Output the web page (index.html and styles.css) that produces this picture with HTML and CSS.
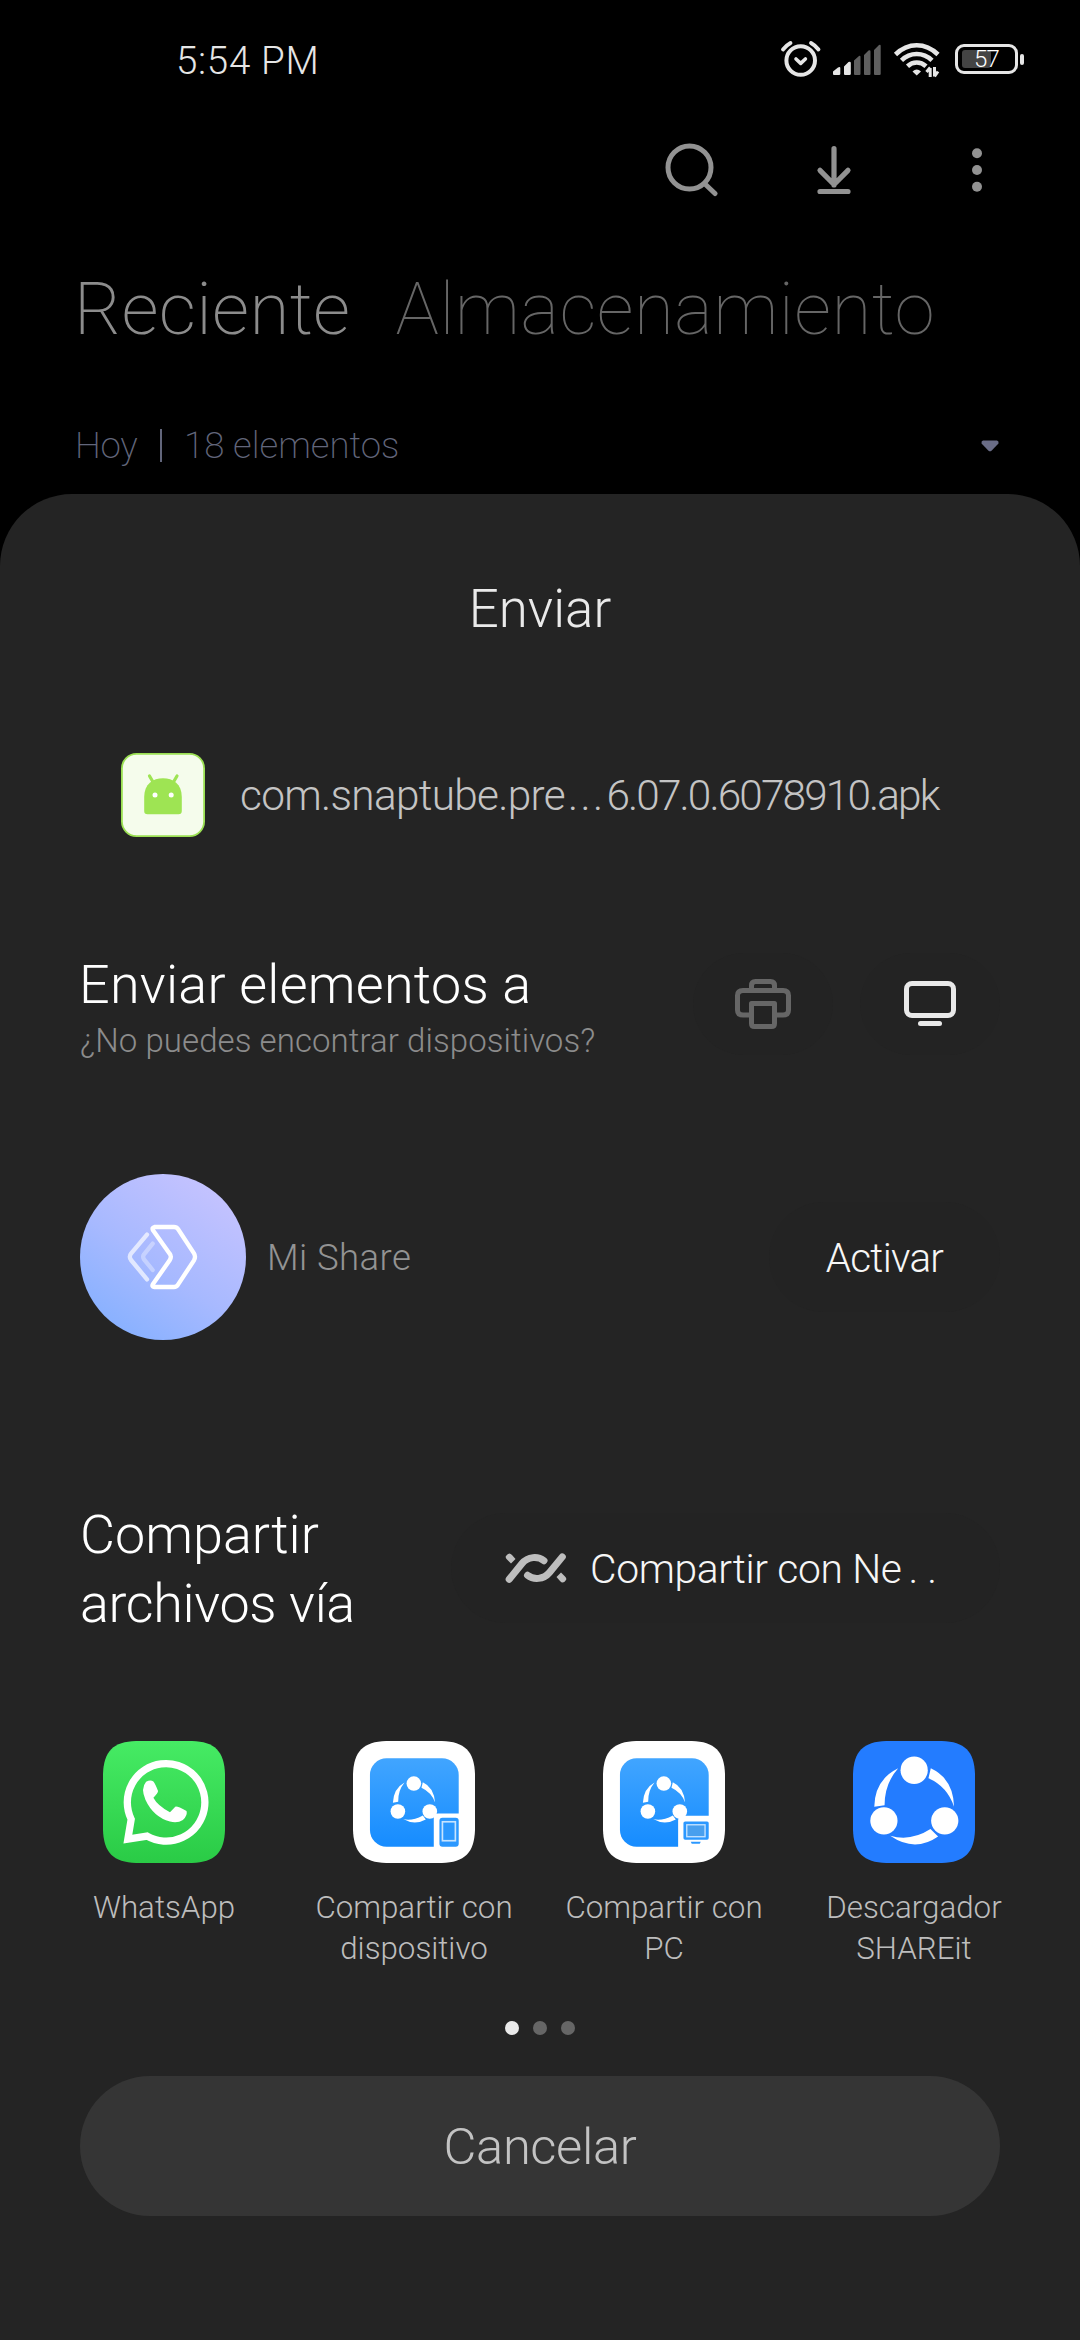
FILE: index.html
```
<!DOCTYPE html>
<html lang="es">
<head>
<meta charset="utf-8">
<title>Enviar</title>
<link rel="stylesheet" href="styles.css">
</head>
<body>
<header class="status">
  <span class="clock">5:54 PM</span>
  <div class="status-icons">
    <svg class="alarm" width="42" height="40" viewBox="0 0 42 40" fill="none" stroke="#e6e6e6" stroke-linecap="round">
      <circle cx="20.7" cy="20.5" r="14.3" stroke-width="4"/>
      <path d="M16 19l4.7 4.3L25.400 19" stroke-width="3.600" stroke-linejoin="round"/>
      <path d="M3 9.500Q6 5.500 10.500 3M38.500 9.500Q35.500 5.500 31 3" stroke-width="3.800"/>
    </svg>
    <svg class="signal" width="48" height="40" viewBox="0 0 48 40">
      <path fill="#e6e6e6" d="M0 31.500 5 27.500Q7.300 26.500 7.300 28V34Q7.300 35 6 35H1Q0 35 0 34zM11 26.500 15.500 22Q17.800 21 17.800 23V34Q17.800 35 16.500 35H12Q11 35 11 34z"/>
      <path fill="#5f5f5f" d="M21 20.500 26 16Q27.500 15.300 27.500 17V34Q27.500 35 26.500 35H22Q21 35 21 34zM31 15 35.500 10.500Q37.500 9.500 37.500 11.500V34Q37.500 35 36.500 35H32Q31 35 31 34zM41 10 46 5Q47.700 4 47.700 6V34Q47.700 35 46.500 35H42Q41 35 41 34z"/>
    </svg>
    <svg class="wifi" width="48" height="40" viewBox="0 0 48 40" fill="none" stroke="#e6e6e6" stroke-width="4.600">
      <path d="M2.500 14.500Q12 5.300 23.700 5.300T45 14.500M8.500 20.300Q15 14 23.700 14T39 20.300M14.500 26.200Q18.500 22.500 23.700 22.500T33 26.200"/>
      <path d="M19.500 31.500Q23.700 27.500 28 31.500L23.700 35.500z" fill="#e6e6e6" stroke="none"/>
      <path d="M37.200 37V28M37.200 27.500 33.500 32M41.500 27V36.500M41.500 36.500 45 31.500" stroke-width="3"/>
    </svg>
    <div class="battery"><div class="battery-body"><i class="charge"></i><b class="percent">57</b></div><i class="battery-tip"></i></div>
  </div>
</header>

<nav class="toolbar">
  <svg width="54" height="54" viewBox="0 0 54 54" fill="none" stroke="#929292" stroke-width="5" stroke-linecap="round"><circle cx="24.500" cy="24.500" r="21.500"/><path d="M40 41l10 9.500"/></svg>
  <svg width="36" height="50" viewBox="0 0 36 50" fill="none" stroke="#929292" stroke-width="5.200" stroke-linecap="round" stroke-linejoin="round"><path d="M18 3.700V40M4 25.300 18 39.500 32 25.300M4 46.500H32"/></svg>
  <svg width="12" height="46" viewBox="0 0 12 46" fill="#929292"><circle cx="6" cy="6.200" r="5"/><circle cx="6" cy="23" r="5"/><circle cx="6" cy="39.800" r="5"/></svg>
</nav>

<div class="tabs"><span class="tab active">Reciente</span><span class="tab">Almacenamiento</span></div>

<div class="group">
  <span class="day">Hoy</span><i class="divider"></i><span class="count">18 elementos</span>
  <svg class="caret" width="18" height="12" viewBox="0 0 18 12" fill="#6a6d87"><path d="M2 .5H16Q18 1 17.500 3.500L10.500 10.700Q9 12 7.500 10.700L.5 3.500Q0 1 2 .5z"/></svg>
</div>

<main class="sheet">
  <h1 class="title">Enviar</h1>

  <div class="file">
    <svg width="84" height="84" viewBox="0 0 84 84">
      <rect x=".9" y=".9" width="82.200" height="82.200" rx="14.500" fill="#f5fcec" stroke="#9be053" stroke-width="1.800"/>
      <path d="M23.200 44C23.200 31 32 25.300 42 25.300S60.800 31 60.800 44V58Q60.800 61.300 57.500 61.300H26.500Q23.200 61.300 23.200 58z" fill="#9ee453"/>
      <path d="M28.500 23 32 29M56 23 52.500 29" stroke="#9ee453" stroke-width="3.200" stroke-linecap="round"/>
      <circle cx="34" cy="42" r="2.500" fill="#fff"/><circle cx="50.200" cy="42" r="2.500" fill="#fff"/>
    </svg>
    <span class="filename">com.snaptube.pre<span class="ellipsis">...</span><span class="version">6.07.0.6078910.apk</span></span>
  </div>

  <section class="devices">
    <div class="devices-text"><h2 class="heading send">Enviar elementos a</h2><p class="hint">¿No puedes encontrar dispositivos?</p></div>
    <div class="icon-button"><svg width="56" height="50" viewBox="0 0 56 50" fill="none" stroke="#666" stroke-width="5" stroke-linejoin="round"><path d="M16.500 10V6.500Q16.500 2.500 20.500 2.500H35.500Q39.500 2.500 39.500 6.500V10M14.500 36H8Q2.500 36 2.500 31V16.500Q2.500 11.500 8 11.500H48Q53.500 11.500 53.500 16.500V31Q53.500 36 48 36H41.500"/><path d="M16.500 24.500H39.500V44.500Q39.500 47.500 36.500 47.500H19.500Q16.500 47.500 16.500 44.500z"/></svg></div>
    <div class="icon-button"><svg width="52" height="46" viewBox="0 0 52 46" fill="none" stroke="#e9e9e9" stroke-width="5"><rect x="2.500" y="2.500" width="47" height="32" rx="5.500"/><path d="M16.500 42.500H35.500" stroke-linecap="round"/></svg></div>
  </section>

  <section class="mishare">
    <div class="mishare-icon"><svg width="166" height="166" viewBox="60 72 498 498" fill="none" stroke="#fff" stroke-width="13" stroke-linecap="round" stroke-linejoin="round"><path d="M283 231H342Q350 231 354 237L402 310Q408 320 402 331L354 404Q350 411 342 411H283Q274 410 279 402L329 331Q336 320 329 311L279 241Q275 233 283 231z"/><path d="M261 254 213 311Q206 320 213 330L261 388" opacity=".68"/><path d="M278 281 252 313Q247 320 252 328L278 360" opacity=".35"/></svg></div>
    <span class="mishare-name">Mi Share</span>
    <button class="pill activate">Activar</button>
  </section>

  <section class="via">
    <h2 class="heading via-heading"><span class="line1">Compartir</span><br>archivos vía</h2>
    <button class="pill nearby">
      <svg width="62" height="30" viewBox="0 0 62 30" fill="none" stroke="#bebebe" stroke-width="7" stroke-linecap="round"><path d="M4.200 26.300 17 10.500C23 3.300 33 3 39 7.700M57.300 3.900 44.500 19.500C38.500 26.700 28.500 27 22.500 22.300" stroke-linejoin="round"/><path fill="#bebebe" stroke="none" d="M1 3Q4-1.500 7 2L10.500 6 6 10.500 2 6.500Q0 4.500 1 3zM61 27Q58 31.500 55 28L51.500 24 56 19.500 60 23.500Q62 25.500 61 27z"/></svg>
      <span class="nearby-text">Compartir con Ne<span class="cut">..</span></span>
    </button>
  </section>

  <section class="apps">
    <div class="app">
      <svg width="122" height="122" viewBox="128 94 368 368">
        <defs><linearGradient id="wa" x1="0" y1="0" x2="0" y2="1"><stop offset="0" stop-color="#46eb64"/><stop offset="1" stop-color="#2acb46"/></linearGradient></defs>
        <path fill="url(#wa)" d="M228 94H396C465 96 494 125 496 194V362C494 431 465 460 396 462H228C159 460 130 431 128 362V194C130 125 159 96 228 94z"/>
        <path d="M203 390 213 330A117 117 0 1 1 261 381z" fill="none" stroke="#fff" stroke-width="22"/>
        <path fill="#fff" d="M258 217Q271 210 280 216Q286 223 294 245Q294 251 280 265Q292 288 330 309L346 292Q351 289 380 305Q384 318 369 332Q353 343 330 337Q280 323 256 271Q241 237 258 217z"/>
      </svg>
      <span class="label">WhatsApp</span>
    </div>
    <div class="app">
      <svg width="122" height="122" viewBox="879 95 367 367">
        <defs><linearGradient id="sb" x1="0" y1="0" x2="0" y2="1"><stop offset="0" stop-color="#41a5ff"/><stop offset="1" stop-color="#168cff"/></linearGradient>
        <g id="ring"><path d="M1034 220Q1001 238 999 281L1015 278Q1014 244 1034 220zM1089 219Q1122 234 1126 280Q1114 249 1085 236zM1030 330Q1056 337 1089 319L1098 331Q1064 350 1030 330z"/><circle cx="1062" cy="223" r="22"/><circle cx="1014" cy="307" r="22"/><circle cx="1110" cy="307" r="22"/></g></defs>
        <path fill="#fff" d="M979 95H1146C1215 97 1244 126 1246 195V362C1244 431 1215 460 1146 462H979C910 460 881 431 879 362V195C881 126 910 97 979 95z"/>
        <rect x="930" y="147" width="267" height="266" rx="50" fill="url(#sb)"/>
        <use href="#ring" fill="#fff"/>
        <path d="M1122 415V326Q1122 313 1135 313H1200V415z" fill="#fff"/>
        <rect x="1139" y="326" width="58" height="87" rx="9" fill="#2b98ff"/><rect x="1148" y="338" width="39" height="57" fill="none" stroke="#c7e4ff" stroke-width="5"/>
      </svg>
      <span class="label">Compartir con<br>dispositivo</span>
    </div>
    <div class="app">
      <svg width="122" height="122" viewBox="879 95 367 367">
        <path fill="#fff" d="M979 95H1146C1215 97 1244 126 1246 195V362C1244 431 1215 460 1146 462H979C910 460 881 431 879 362V195C881 126 910 97 979 95z"/>
        <rect x="930" y="147" width="267" height="266" rx="50" fill="url(#sb)"/>
        <use href="#ring" fill="#fff"/>
        <path d="M1105 415V334Q1105 320 1119 320H1200V415z" fill="#fff"/>
        <rect x="1121" y="337" width="76" height="55" rx="5" fill="#2b98ff"/><rect x="1131" y="347" width="55" height="36" fill="#489fee" stroke="#c7e4ff" stroke-width="4"/><path d="M1143 398H1173L1170 404H1146z" fill="#2b98ff"/>
      </svg>
      <span class="label">Compartir con<br>PC</span>
    </div>
    <div class="app">
      <svg width="122" height="122" viewBox="938 95 367 367">
        <path fill="#237cff" d="M1038 95H1205C1274 97 1303 126 1305 195V362C1303 431 1274 460 1205 462H1038C969 460 940 431 938 362V195C940 126 969 97 1038 95z"/>
        <g fill="#fff"><path d="M1074 177Q1003 212 1002 293L1033 288Q1033 223 1074 177zM1172 177Q1240 209 1242 293Q1222 232 1165 207zM1050 380Q1112 398 1171 360L1194 382Q1124 431 1050 380z"/><circle cx="1122" cy="183" r="41"/><circle cx="1031" cy="335" r="41"/><circle cx="1214" cy="335" r="41"/></g>
      </svg>
      <span class="label">Descargador<br>SHAREit</span>
    </div>
  </section>

  <div class="pager"><i class="dot on"></i><i class="dot"></i><i class="dot"></i></div>
  <button class="cancel">Cancelar</button>
</main>
</body>
</html>
```
FILE: styles.css
```
* { box-sizing: border-box; margin: 0; padding: 0; }
body { width: 1080px; height: 2340px; background: #000; font-family: Roboto, "Noto Sans", sans-serif; font-weight: 300; overflow: hidden; display: flex; flex-direction: column; }
svg { display: block; flex: none; }
button { border: 0; background: none; font: inherit; color: inherit; }
span, h1, h2, p { white-space: nowrap; }

.status { height: 120px; display: flex; align-items: center; justify-content: space-between; padding: 0 55px 0 176px; }
.clock { color: #e6e6e6; font-size: 38.5px; letter-spacing: .7px; }
.status-icons { display: flex; align-items: center; }
.signal { margin-left: 11px; }
.wifi { margin-left: 12px; }
.battery { display: flex; align-items: center; gap: 2px; margin: -2px 0 0 14px; width: 70px; }
.battery-body { width: 63px; height: 30px; border: 3px solid #e6e6e6; border-radius: 9px; display: grid; align-items: center; }
.charge { grid-area: 1 / 1; margin-left: 4px; width: 29px; height: 18px; border-radius: 3px; background: #444; }
.percent { grid-area: 1 / 1; text-align: center; font-weight: 300; font-size: 24px; line-height: 24px; color: #fff; letter-spacing: -.8px; }
.battery-tip { width: 4px; height: 11px; border-radius: 2px; background: #e6e6e6; }

.toolbar { height: 100px; display: flex; align-items: center; justify-content: flex-end; padding-right: 97px; }
.toolbar svg + svg { margin-left: 97px; }
.toolbar svg + svg + svg { margin-left: 119px; }

.tabs { height: 177px; display: flex; align-items: center; gap: 45px; padding-left: 74px; color: #666; font-size: 72.800px; font-weight: 100; }
.tab { letter-spacing: .45px; }
.tab.active { color: #8c8c8c; font-weight: 200; letter-spacing: .3px; }

.group { height: 97px; display: flex; align-items: center; padding: 0 81px 0 75px; color: #62667b; font-size: 36.600px; font-weight: 200; }
.day { letter-spacing: -.2px; width: 85px; }
.divider { width: 2px; height: 33px; background: #62667b; margin-right: 22px; }
.count { flex: 1; letter-spacing: 0; }

.sheet { height: 1846px; background: #242424; border-radius: 72px 72px 0 0; padding: 79px 80px 0; display: flex; flex-direction: column; }
.title { text-align: center; font-size: 52.800px; font-weight: 300; line-height: 72px; color: #eaeaea; }
.file { margin-top: 108px; padding-left: 41px; height: 84px; display: flex; align-items: center; gap: 35px; }
.filename { font-size: 42.300px; font-weight: 300; color: #c4c4c4; letter-spacing: -.66px; }
.ellipsis { letter-spacing: 2.400px; margin: 0 1px 0 3px; }
.version { letter-spacing: -1.850px; }

.devices { margin-top: 114px; height: 106px; display: flex; align-items: center; gap: 27px; }
.devices-text { flex: 1; padding-top: 8px; }
.heading { color: #fff; font-size: 53.900px; font-weight: 300; }
.send { line-height: 64px; letter-spacing: .25px; margin-left: -1px; }
.hint { font-size: 33px; line-height: 44px; color: #8c8c8c; letter-spacing: .07px; margin-top: 2px; }
.icon-button { width: 140px; height: 102px; border-radius: 51px; background: #232323; display: flex; align-items: center; justify-content: center; }

.mishare { margin-top: 117px; height: 166px; display: flex; align-items: center; }
.mishare-icon { width: 166px; height: 166px; border-radius: 50%; background: linear-gradient(35deg, #84b0ff 8%, #a7b9ff 45%, #c6c3ff 90%); }
.mishare-name { flex: 1; margin-left: 21px; font-size: 36.600px; font-weight: 300; color: #939393; letter-spacing: .39px; }
.pill { background: #232323; border-radius: 55px; color: #f6f6f6; font-weight: 300; }
.activate { width: 231px; height: 110px; padding-top: 2px; font-size: 40.400px; letter-spacing: -.71px; }

.via { margin-top: 159px; height: 138px; display: flex; align-items: center; justify-content: space-between; }
.via-heading { line-height: 69px; padding-top: 1px; letter-spacing: -.35px; }
.line1 { letter-spacing: 0; }
.nearby { width: 549px; height: 110px; display: flex; align-items: center; padding-left: 54px; gap: 23px; font-size: 40.800px; letter-spacing: -.35px; }
.nearby-text { padding-top: 2px; }
.cut { letter-spacing: 9px; margin-left: 7px; }

.apps { margin: 104px -41px 0; height: 230px; display: grid; grid-template-columns: repeat(4, 250px); }
.app { display: flex; flex-direction: column; align-items: center; gap: 24px; text-align: center; }
.label { font-size: 31.300px; line-height: 41px; color: #bdbdbd; }

.pager { margin-top: 50px; height: 14px; display: flex; justify-content: center; gap: 14px; }
.dot { width: 14px; height: 14px; border-radius: 50%; background: #666; }
.dot.on { background: #eaeaea; }
.cancel { margin-top: 41px; height: 140px; border-radius: 70px; background: #353535; color: #c3c3c3; font-size: 50.700px; font-weight: 300; letter-spacing: -.38px; }
```
